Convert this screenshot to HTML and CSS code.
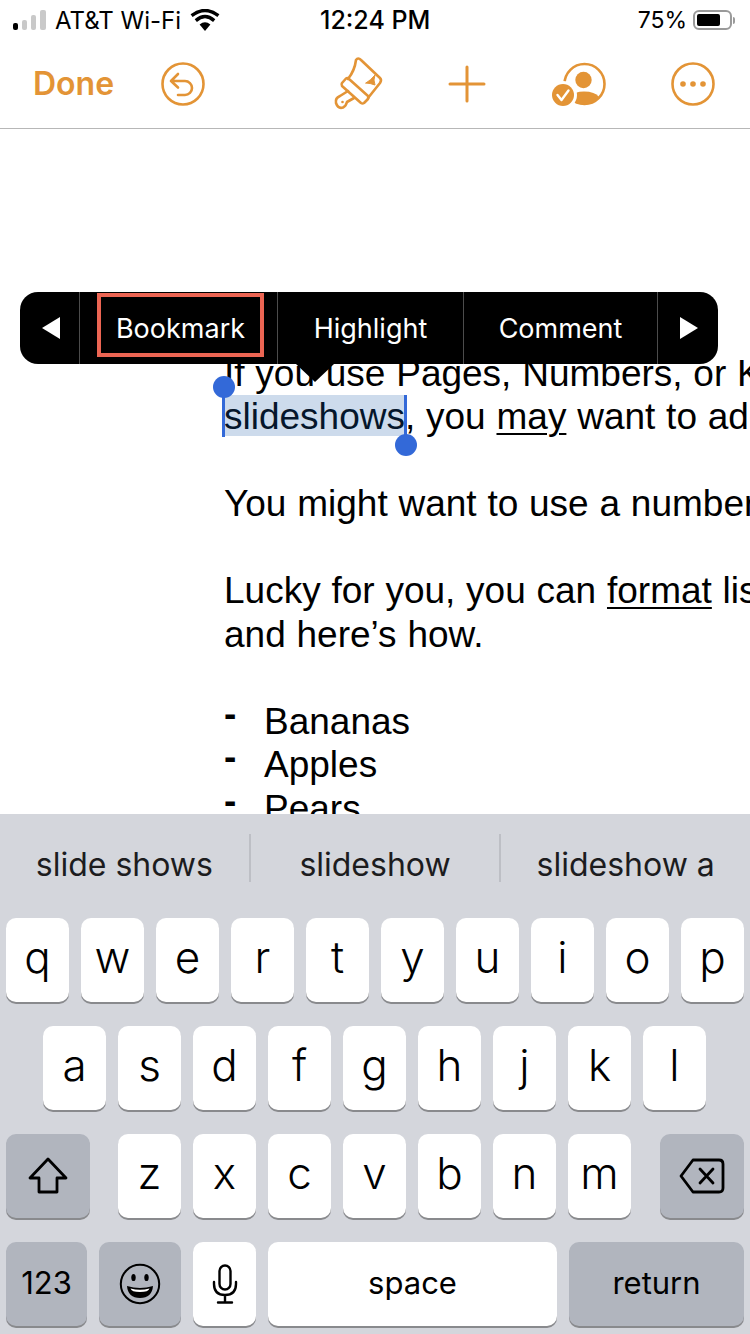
FILE: index.html

```html
<!DOCTYPE html>
<html lang="en">
<head>
  <meta charset="UTF-8" />
  <meta name="viewport" content="width=device-width, initial-scale=1" />
  <title>Pages</title>
  <link rel="stylesheet" href="styles.css">
</head>
<body>

  <header class="status">
    <div class="signal"><i class="b1"></i><i class="b2"></i><i class="b3"></i><i class="b4"></i></div>
    <div class="carrier">AT&amp;T Wi-Fi</div>
    <svg class="wifi" width="30" height="22" viewBox="0 0 30 22">
      <path d="M15 22 L9.6 15.6 Q15 11 20.4 15.6 Z" fill="#000"/>
      <path d="M5.8 11.6 Q15 3.6 24.2 11.6" fill="none" stroke="#000" stroke-width="3.4"/>
      <path d="M1.6 6.6 Q15 -3.6 28.4 6.6" fill="none" stroke="#000" stroke-width="3.4"/>
    </svg>
    <div class="time">12:24 PM</div>
    <div class="pct">75%</div>
    <div class="battery"><div class="battery-fill"></div></div>
    <div class="battery-nub"></div>
  </header>

  <nav class="toolbar">
    <div class="done">Done</div>
    <svg class="tool undo" width="44" height="44" viewBox="0 0 44 44" fill="none" stroke="#e39436" stroke-width="2.6" stroke-linecap="round" stroke-linejoin="round">
      <circle cx="22" cy="22" r="20.5"/>
      <path d="M17 12 L10 19 L17 25.5 M10 19 H24 A7 7 0 0 1 24 33 H17"/>
    </svg>
    <svg class="tool brush" width="56" height="58" viewBox="12 5 56 58" fill="none" stroke="#e39436" stroke-width="2.6" stroke-linecap="round" stroke-linejoin="round">
      <path d="M28 29 C32 24 35 18 36 10 Q38 7 41 10 L60 28 Q62 30 60 33 L48 48"/>
      <path d="M22 33 L26 28.5 Q27.5 27.5 29 29 L48 46 Q49 48 48 49 L44 53 Q42.5 54 41 53 L22 36 Q21 34.5 22 33 Z"/>
      <path d="M28 41 L20 46 Q15 48 16 53 Q18 59 23 57.5 Q26 56 27 52 L34 48"/>
      <circle cx="22.5" cy="52" r="1.3" fill="#e39436" stroke="none"/>
      <path d="M46 33 Q51 30 55 25 Q53 30 55 35 Q50 33 46 33 Z" fill="#e39436" stroke-width="1"/>
    </svg>
    <svg class="tool plus" width="40" height="40" viewBox="0 0 40 40" fill="none" stroke="#e39436" stroke-width="3" stroke-linecap="round">
      <path d="M20 3 V37 M3 20 H37"/>
    </svg>
    <svg class="tool collab" width="56" height="56" viewBox="20 6 56 56">
      <circle cx="54.5" cy="34" r="20" fill="none" stroke="#e39436" stroke-width="2.6"/>
      <circle cx="53.5" cy="30" r="8.2" fill="#e39436"/>
      <path d="M42 46 Q44 41.5 54 41.5 Q65 41.5 69 47 Q63 54.5 54 54.5 Q47 54.5 42 50 Z" fill="#e39436"/>
      <circle cx="33" cy="45" r="14" fill="#fff"/>
      <circle cx="33" cy="45" r="11" fill="#e39436"/>
      <path d="M27.5 45 L31.5 50 L38.5 40.5" fill="none" stroke="#fff" stroke-width="2.4" stroke-linecap="round" stroke-linejoin="round"/>
    </svg>
    <svg class="tool more" width="44" height="44" viewBox="0 0 44 44">
      <circle cx="22" cy="22" r="20.5" fill="none" stroke="#e39436" stroke-width="2.6"/>
      <circle cx="12" cy="22" r="2.8" fill="#e39436"/>
      <circle cx="22" cy="22" r="2.8" fill="#e39436"/>
      <circle cx="32" cy="22" r="2.8" fill="#e39436"/>
    </svg>
  </nav>

  <main class="doc">
    <section class="para">
      <p>If you use Pages, Numbers, or Keynote for your documents, spreadsheets, and</p>
      <p><span class="selected">slideshows</span>, you <u>may</u> want to add a list to your work.</p>
    </section>
    <section class="para">
      <p>You might want to use a numbered list or a bulleted one.</p>
    </section>
    <section class="para">
      <p>Lucky for you, you can <u>format</u> lists in the apps easily,</p>
      <p>and here’s how.</p>
    </section>
    <section class="para">
      <p class="item"><span class="dash">-</span>Bananas</p>
      <p class="item"><span class="dash">-</span>Apples</p>
      <p class="item"><span class="dash">-</span>Pears</p>
    </section>

    <div class="caret caret-start"></div>
    <div class="caret caret-end"></div>
  </main>

  <div class="popup">
    <div class="cell arrow-cell"><div class="arrow-left"></div></div>
    <div class="cell bookmark-cell"><div class="bookmark">Bookmark</div></div>
    <div class="cell highlight-cell">Highlight</div>
    <div class="cell comment-cell">Comment</div>
    <div class="cell arrow-cell end"><div class="arrow-right"></div></div>
    <div class="popup-tip"></div>
  </div>

  <section class="keyboard">
    <div class="suggestions">
      <div class="suggestion">slide shows</div>
      <div class="suggestion">slideshow</div>
      <div class="suggestion">slideshow a</div>
    </div>

    <div class="row">
      <div class="key">q</div><div class="key">w</div><div class="key">e</div><div class="key">r</div><div class="key">t</div>
      <div class="key">y</div><div class="key">u</div><div class="key">i</div><div class="key">o</div><div class="key">p</div>
    </div>
    <div class="row row-home">
      <div class="key">a</div><div class="key">s</div><div class="key">d</div><div class="key">f</div><div class="key">g</div>
      <div class="key">h</div><div class="key">j</div><div class="key">k</div><div class="key">l</div>
    </div>
    <div class="row row-spread">
      <div class="key dark wide">
        <svg width="40" height="38" viewBox="0 0 40 38" fill="none" stroke="#000" stroke-width="2.8" stroke-linejoin="round">
          <path d="M20 2 L38 21 H29 V35 H11 V21 H2 Z"/>
        </svg>
      </div>
      <div class="letters">
        <div class="key">z</div><div class="key">x</div><div class="key">c</div><div class="key">v</div>
        <div class="key">b</div><div class="key">n</div><div class="key">m</div>
      </div>
      <div class="key dark wide">
        <svg width="46" height="36" viewBox="0 0 46 36" fill="none" stroke="#000" stroke-width="2.8" stroke-linejoin="round" stroke-linecap="round">
          <path d="M14 2 H40 Q44 2 44 6 V30 Q44 34 40 34 H14 L2 18 Z"/>
          <path d="M21 11 L34 25 M34 11 L21 25"/>
        </svg>
      </div>
    </div>
    <div class="row">
      <div class="key dark small k123">123</div>
      <div class="key dark k-emoji">
        <svg width="42" height="42" viewBox="0 0 42 42">
          <circle cx="21" cy="21" r="19.2" fill="none" stroke="#000" stroke-width="2"/>
          <ellipse cx="14.5" cy="14.5" rx="2.2" ry="3.6" fill="#000"/>
          <ellipse cx="27.5" cy="14.5" rx="2.2" ry="3.6" fill="#000"/>
          <path d="M8 23 Q21 27 34 23 Q33 35 21 35 Q9 35 8 23 Z" fill="#000"/>
          <path d="M11.5 25.5 Q21 28 30.5 25.5 Q29.5 29 21 29 Q12.5 29 11.5 25.5 Z" fill="#fff"/>
        </svg>
      </div>
      <div class="key">
        <svg width="26" height="40" viewBox="0 0 26 40" fill="none" stroke="#000" stroke-width="2.4" stroke-linecap="round">
          <rect x="7.5" y="1.5" width="11" height="24" rx="5.5"/>
          <path d="M2 18 V20 Q2 31 13 31 Q24 31 24 20 V18 M13 31 V38 M6 38.5 H20"/>
        </svg>
      </div>
      <div class="key small space">space</div>
      <div class="key dark small return">return</div>
    </div>
  </section>

</body>
</html>
```

FILE: styles.css

```css
* {
  box-sizing: border-box;
}
html, body {
  margin: 0;
  padding: 0;
}
body {
  width: 750px;
  height: 1334px;
  position: relative;
  overflow: hidden;
  background-color: #fff;
  font-family: Inter, "Liberation Sans", sans-serif;
}

/* status bar */
.status {
  height: 40px;
  display: flex;
  align-items: center;
  padding: 0 15px 0 13px;
  font-size: 24px;
  color: #000;
}
.signal {
  display: flex;
  align-items: flex-end;
  gap: 4px;
  height: 20px;
}
.signal i {
  display: block;
  width: 5px;
  border-radius: 2px;
  background-color: #c9c9c9;
}
.signal .b1 { height: 7px; background-color: #000; }
.signal .b2 { height: 10px; }
.signal .b3 { height: 15px; }
.signal .b4 { height: 20px; width: 6px; }
.carrier {
  margin-left: 9px;
  width: 126px;
  white-space: nowrap;
}
.wifi {
  margin-left: 9px;
}
.time {
  margin-left: 100px;
  width: 109px;
  font-size: 25px;
  font-weight: 500;
  white-space: nowrap;
}
.pct {
  margin-left: auto;
  font-size: 23px;
}
.battery {
  margin-left: 6px;
  width: 39px;
  height: 20px;
  border: 2px solid #9a9a9a;
  border-radius: 6px;
  padding: 2px;
}
.battery-fill {
  width: 75%;
  height: 100%;
  background-color: #000;
  border-radius: 2px;
}
.battery-nub {
  width: 2px;
  height: 7px;
  margin-left: 1px;
  background-color: #9a9a9a;
  border-radius: 0 2px 2px 0;
}

/* toolbar */
.toolbar {
  height: 89px;
  display: flex;
  align-items: center;
  padding: 0 0 1px 33px;
  border-bottom: 1px solid #b7b7b7;
}
.done {
  width: 82px;
  font-size: 32px;
  font-weight: 600;
  color: #e39436;
  white-space: nowrap;
}
.undo { margin-left: 46px; }
.brush { margin-left: 127px; }
.plus { margin-left: 59px; }
.collab { margin-left: 63px; }
.more { margin-left: 65px; }

/* document */
.doc {
  height: 685px;
  position: relative;
  overflow: hidden;
  padding: 222.6px 0 0 224px;
  font-family: "Liberation Sans", Arial, sans-serif;
  font-size: 37px;
  line-height: 43.5px;
  word-spacing: 0.5px;
  color: #000;
  white-space: nowrap;
}
.para {
  margin-bottom: 43.5px;
}
.para p {
  margin: 0;
}
.selected {
  display: inline-block;
  height: 41px;
  background-color: #cddbec;
  color: #05162b;
}
u {
  text-underline-offset: 4px;
  text-decoration-thickness: 2px;
}
.item {
  display: flex;
}
.dash {
  width: 40px;
  margin-top: -8px;
  font-weight: bold;
}
.caret {
  position: absolute;
  width: 3px;
  background-color: #3369d8;
}
.caret::after {
  content: "";
  position: absolute;
  left: -9.5px;
  width: 22px;
  height: 22px;
  border-radius: 50%;
  background-color: #3369d8;
}
.caret-start {
  left: 222px;
  top: 257px;
  height: 51px;
}
.caret-start::after {
  top: -10px;
}
.caret-end {
  left: 404px;
  top: 266px;
  height: 50px;
}
.caret-end::after {
  bottom: -11px;
}

/* popup menu over the text */
.popup {
  position: absolute;
  left: 20px;
  top: 292px;
  width: 698px;
  height: 72px;
  display: flex;
  background-color: #000;
  border-radius: 18px;
  color: #fff;
  font-size: 27px;
}
.cell {
  display: flex;
  align-items: center;
  justify-content: center;
  border-right: 1px solid #4c4c4c;
  white-space: nowrap;
}
.arrow-cell {
  width: 60px;
  padding-left: 2px;
}
.arrow-cell.end {
  width: 60px;
  border-right: none;
}
.bookmark-cell { width: 198px; }
.highlight-cell { width: 186px; }
.comment-cell { width: 194px; }
.bookmark {
  width: 167px;
  height: 64px;
  margin: -6px 0 0 4px;
  display: flex;
  align-items: center;
  justify-content: center;
  border: 4px solid #ec6553;
  padding-top: 6px;
}
.arrow-left {
  width: 0;
  height: 0;
  border-top: 11px solid transparent;
  border-bottom: 11px solid transparent;
  border-right: 18px solid #fff;
}
.arrow-right {
  width: 0;
  height: 0;
  border-top: 11px solid transparent;
  border-bottom: 11px solid transparent;
  border-left: 18px solid #fff;
}
.popup-tip {
  position: absolute;
  left: 276px;
  top: 72px;
  width: 0;
  height: 0;
  border-left: 19px solid transparent;
  border-right: 19px solid transparent;
  border-top: 18px solid #000;
}

/* keyboard */
.keyboard {
  height: 520px;
  background-color: #d4d6dc;
  padding: 0 6px;
}
.suggestions {
  height: 104px;
  margin: 0 -6px;
  display: flex;
  padding-top: 20px;
}
.suggestion {
  flex: 1;
  height: 48px;
  display: flex;
  align-items: center;
  justify-content: center;
  font-size: 32px;
  color: #1c1c1e;
  border-right: 2px solid #bdbfc5;
  padding-top: 12px;
}
.suggestion:last-child {
  border-right: none;
}
.row {
  height: 84px;
  margin-bottom: 24px;
  display: flex;
  justify-content: center;
  gap: 12px;
}
.row-home {
  padding-right: 1px;
}
.row-spread {
  justify-content: space-between;
}
.letters {
  display: flex;
  gap: 12px;
  margin-left: -1px;
}
.key {
  width: 63px;
  height: 84px;
  display: flex;
  align-items: center;
  justify-content: center;
  padding-bottom: 6px;
  background-color: #fff;
  border-radius: 10px;
  box-shadow: 0 2px 0 #898a8d;
  font-size: 44px;
  font-weight: 300;
  color: #000;
}
.key svg {
  margin-bottom: -6px;
}
.key.dark {
  background-color: #b1b5be;
}
.key.small {
  padding-bottom: 3px;
  font-size: 31px;
  font-weight: 400;
}
.wide { width: 84px; }
.k123 { width: 81px; }
.k-emoji { width: 82px; }
.space { width: 289px; }
.return { width: 175px; }
```
